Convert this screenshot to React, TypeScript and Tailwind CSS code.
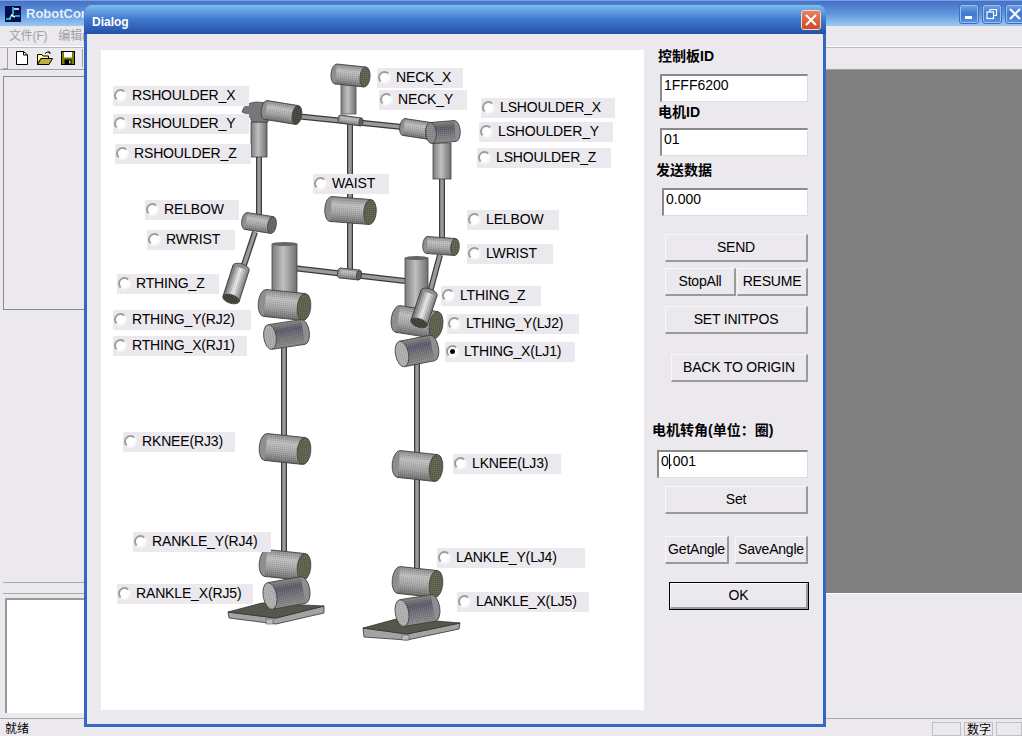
import React from "react"

const radios = [
  { label: "NECK_X", box: "left-[276px] top-[18px] w-[86px]" },
  { label: "NECK_Y", box: "left-[278px] top-[40px] w-[88px]" },
  { label: "RSHOULDER_X", box: "left-[12px] top-[36px] w-[136px]" },
  { label: "RSHOULDER_Y", box: "left-[12px] top-[64px] w-[136px]" },
  { label: "RSHOULDER_Z", box: "left-[14px] top-[94px] w-[136px]" },
  { label: "LSHOULDER_X", box: "left-[380px] top-[48px] w-[134px]" },
  { label: "LSHOULDER_Y", box: "left-[378px] top-[72px] w-[134px]" },
  { label: "LSHOULDER_Z", box: "left-[376px] top-[98px] w-[134px]" },
  { label: "WAIST", box: "left-[212px] top-[124px] w-[76px]" },
  { label: "RELBOW", box: "left-[44px] top-[150px] w-[94px]" },
  { label: "RWRIST", box: "left-[46px] top-[180px] w-[88px]" },
  { label: "LELBOW", box: "left-[366px] top-[160px] w-[92px]" },
  { label: "LWRIST", box: "left-[366px] top-[194px] w-[86px]" },
  { label: "RTHING_Z", box: "left-[16px] top-[224px] w-[102px]" },
  { label: "RTHING_Y(RJ2)", box: "left-[12px] top-[260px] w-[138px]" },
  { label: "RTHING_X(RJ1)", box: "left-[12px] top-[286px] w-[134px]" },
  { label: "LTHING_Z", box: "left-[340px] top-[236px] w-[100px]" },
  { label: "LTHING_Y(LJ2)", box: "left-[346px] top-[264px] w-[132px]" },
  { label: "LTHING_X(LJ1)", box: "left-[344px] top-[292px] w-[130px]", checked: true },
  { label: "RKNEE(RJ3)", box: "left-[22px] top-[382px] w-[112px]" },
  { label: "LKNEE(LJ3)", box: "left-[352px] top-[404px] w-[108px]" },
  { label: "RANKLE_Y(RJ4)", box: "left-[32px] top-[482px] w-[138px]" },
  { label: "RANKLE_X(RJ5)", box: "left-[16px] top-[534px] w-[136px]" },
  { label: "LANKLE_Y(LJ4)", box: "left-[336px] top-[498px] w-[148px]" },
  { label: "LANKLE_X(LJ5)", box: "left-[356px] top-[542px] w-[132px]" },
]

function Radio({ label, box, checked }: { label: string; box: string; checked?: boolean }) {
  return (
    <div className={`absolute h-[20px] pb-[2px] bg-[#ebe9ed] flex items-center text-[14px] leading-[18px] tracking-[-0.15px] text-black whitespace-nowrap ${box}`}>
      <span className="ml-px w-[13px] h-[13px] rounded-full bg-white border-2 border-t-[#9c9c9c] border-l-[#9c9c9c] border-r-[#f6f6f6] border-b-[#f6f6f6] flex items-center justify-center shrink-0">
        {checked && <span className="w-[5px] h-[5px] rounded-full bg-black" />}
      </span>
      <span className="ml-[5px]">{label}</span>
    </div>
  )
}

function Btn({ children, className }: { children: React.ReactNode; className: string }) {
  return (
    <div className={`h-[28px] bg-[#ebe9ed] border-t border-l border-t-[#f8f8f8] border-l-[#f8f8f8] border-r-2 border-b-2 border-r-[#9a9a9a] border-b-[#9a9a9a] flex items-center justify-center text-[14px] tracking-[-0.2px] text-black ${className}`}>
      {children}
    </div>
  )
}

function Field({ children, className }: { children: React.ReactNode; className: string }) {
  return (
    <div className={`h-[28px] bg-white border-t-2 border-l-2 border-t-[#8a8a8a] border-l-[#8a8a8a] border-r border-b border-r-[#dcdcdc] border-b-[#dcdcdc] pl-[2px] text-[14px] leading-[19px] text-black ${className}`}>
      {children}
    </div>
  )
}

// cylinder along p1->p2, cap drawn at p2
function Cyl({ x1, y1, x2, y2, r, fill = "url(#body)", cap = "#5f5f4c" }: { x1: number; y1: number; x2: number; y2: number; r: number; fill?: string; cap?: string }) {
  const len = Math.hypot(x2 - x1, y2 - y1)
  const deg = (Math.atan2(y2 - y1, x2 - x1) * 180) / Math.PI
  const e = r * 0.5
  return (
    <g transform={`translate(${x1} ${y1}) rotate(${deg})`} stroke="#3c3c3c" strokeWidth="0.8">
      <ellipse cx={0} cy={0} rx={e} ry={r} fill="#8e8e8e" />
      <rect x={0} y={-r} width={len} height={r * 2} fill={fill} stroke="none" />
      <rect x={0} y={-r} width={len} height={r * 2} fill="url(#dither)" stroke="none" />
      <line x1={0} y1={-r} x2={len} y2={-r} />
      <line x1={0} y1={r} x2={len} y2={r} />
      <ellipse cx={len} cy={0} rx={e} ry={r} fill={cap} />
      <ellipse cx={len} cy={0} rx={e} ry={r} fill="url(#dither)" stroke="none" />
    </g>
  )
}

function Rod({ x1, y1, x2, y2 }: { x1: number; y1: number; x2: number; y2: number }) {
  return (
    <g>
      <line x1={x1} y1={y1} x2={x2} y2={y2} stroke="#3a3a3a" strokeWidth="6" />
      <line x1={x1} y1={y1} x2={x2} y2={y2} stroke="#9a9a9a" strokeWidth="3.5" />
    </g>
  )
}

function Robot() {
  return (
    <svg className="absolute inset-0" width="543" height="660" viewBox="101 50 543 660">
      <defs>
        <pattern id="dither" width="2" height="2" patternUnits="userSpaceOnUse">
          <rect width="1" height="1" fill="#000" opacity="0.14" />
          <rect x="1" y="1" width="1" height="1" fill="#fff" opacity="0.14" />
        </pattern>
        <linearGradient id="body" x1="0" y1="0" x2="0" y2="1">
          <stop offset="0" stopColor="#8a8a8a" />
          <stop offset="0.3" stopColor="#c2c2c2" />
          <stop offset="0.65" stopColor="#a2a2a2" />
          <stop offset="1" stopColor="#6c6c6c" />
        </linearGradient>
        <linearGradient id="dark" x1="0" y1="0" x2="0" y2="1">
          <stop offset="0" stopColor="#8c8c8c" />
          <stop offset="0.35" stopColor="#77777c" />
          <stop offset="0.7" stopColor="#5a5a6c" />
          <stop offset="1" stopColor="#8a8a80" />
        </linearGradient>
        <linearGradient id="shiny" x1="0" y1="0" x2="0" y2="1">
          <stop offset="0" stopColor="#777" />
          <stop offset="0.5" stopColor="#efefef" />
          <stop offset="1" stopColor="#666" />
        </linearGradient>
        <linearGradient id="post" x1="0" y1="0" x2="1" y2="0">
          <stop offset="0" stopColor="#7c7c7c" />
          <stop offset="0.45" stopColor="#c0c0c0" />
          <stop offset="1" stopColor="#6f6f6f" />
        </linearGradient>
      </defs>

      {/* neck */}
      <rect x="341" y="78" width="15" height="36" fill="url(#post)" stroke="#555" strokeWidth="0.8" />
      <Cyl x1={336} y1={74} x2={365} y2={77} r={10} />

      {/* shoulders rod and spine */}
      <Rod x1={295} y1={116} x2={402} y2={127} />
      <Rod x1={350} y1={120} x2={350} y2={274} />
      <Cyl x1={340} y1={119} x2={361} y2={122} r={4} />
      <Cyl x1={331} y1={209} x2={370} y2={212} r={12.5} />

      {/* right arm */}
      <Rod x1={259} y1={155} x2={259} y2={216} />
      <rect x="251" y="122" width="16" height="35" fill="url(#post)" stroke="#444" strokeWidth="0.8" />
      <path d="M242 112 Q244 103 256 102 L270 103 L268 122 L252 122 Q250 114 242 112Z" fill="#77777a" stroke="#444" strokeWidth="0.8" />
      <Cyl x1={266} y1={110} x2={297} y2={115} r={9.5} fill="url(#body)" cap="#44443c" />
      <Cyl x1={246} y1={221} x2={272} y2={225} r={8.5} cap="#65656a" />
      <Rod x1={255} y1={232} x2={243} y2={268} />
      <Cyl x1={241} y1={268} x2={231} y2={299} r={8.5} fill="url(#shiny)" cap="#3e3e36" />

      {/* left arm */}
      <Rod x1={442} y1={178} x2={442} y2={240} />
      <rect x="433" y="143" width="18" height="36" fill="url(#post)" stroke="#444" strokeWidth="0.8" />
      <Cyl x1={404} y1={127} x2={430} y2={131} r={8.5} cap="#8f8f8f" />
      <Cyl x1={455} y1={131} x2={431} y2={133} r={10.5} fill="url(#dark)" cap="#8a8a8a" />
      <Cyl x1={427} y1={245} x2={455} y2={247} r={8.5} />
      <Rod x1={440} y1={255} x2={430} y2={292} />

      {/* hips */}
      <Rod x1={293} y1={268} x2={405} y2={281} />
      <Cyl x1={340} y1={273} x2={359} y2={275} r={5} />
      <rect x="272" y="244" width="25" height="49" fill="url(#post)" stroke="#444" strokeWidth="0.8" />
      <ellipse cx="284.5" cy="244" rx="12.5" ry="2" fill="#666" />
      <rect x="405" y="258" width="23" height="50" fill="url(#post)" stroke="#444" strokeWidth="0.8" />
      <ellipse cx="416.5" cy="258" rx="11.5" ry="2" fill="#666" />

      {/* right leg */}
      <Rod x1={284} y1={345} x2={284} y2={556} />
      <Cyl x1={265} y1={303} x2={304} y2={307} r={13.5} />
      <Cyl x1={303} y1={332} x2={270} y2={337} r={12.5} fill="url(#dark)" cap="#adadad" />
      <Cyl x1={266} y1={447} x2={304} y2={451} r={13.5} />
      <path d="M228 612 L276 618 L324 606 L324 613 L276 624 L229 618Z" fill="#a3a3a3" stroke="#333" strokeWidth="0.8" />
      <path d="M228 612 L262 603 L324 606 L276 618Z" fill="#56564a" stroke="#333" strokeWidth="0.8" />
      <rect x="266" y="619" width="7" height="5" fill="#bdbdbd" stroke="#555" strokeWidth="0.6" />
      <Cyl x1={266} y1={563} x2={304} y2={567} r={13.5} />
      <Cyl x1={303} y1={590} x2={270} y2={596} r={13.5} fill="url(#dark)" cap="#b2b2b2" />

      {/* left leg */}
      <Rod x1={417} y1={360} x2={417} y2={572} />
      <Cyl x1={398} y1={319} x2={436} y2={325} r={13.5} />
      <Cyl x1={432} y1={348} x2={402} y2={354} r={13} fill="url(#dark)" cap="#b0b0b0" />
      <Cyl x1={429} y1={293} x2={419} y2={323} r={8.5} fill="url(#shiny)" cap="#3e3e36" />
      <Cyl x1={399} y1={464} x2={436} y2={468} r={13.5} />
      <path d="M363 628 L407 634 L460 623 L459 629 L407 640 L364 637Z" fill="#a3a3a3" stroke="#333" strokeWidth="0.8" />
      <path d="M363 628 L400 618 L460 623 L407 634Z" fill="#56564a" stroke="#333" strokeWidth="0.8" />
      <rect x="402" y="635" width="7" height="5" fill="#bdbdbd" stroke="#555" strokeWidth="0.6" />
      <Cyl x1={399} y1={580} x2={436} y2={584} r={13.5} />
      <Cyl x1={433} y1={608} x2={402} y2={613} r={13.5} fill="url(#dark)" cap="#b2b2b2" />
    </svg>
  )
}

function DocIcon() {
  return (
    <svg width="12" height="14" viewBox="0 0 12 14">
      <path d="M.5 .5H7.5L11.5 4V13.5H.5Z" fill="#fff" stroke="#000" />
      <path d="M7.5 .5V4H11.5" fill="none" stroke="#000" />
    </svg>
  )
}

function OpenIcon() {
  return (
    <svg width="16" height="14" viewBox="0 0 16 14">
      <path d="M.5 3.5H5L6 5H11.5V7.5H4L.5 13.5Z" fill="#ffff99" stroke="#000" />
      <path d="M.5 13.5L4 7.5H15.5L12 13.5Z" fill="#c0b040" stroke="#000" />
      <path d="M8 2.5Q10 0 13 1.5M13 1.5L11.5 .5M13 1.5V3" fill="none" stroke="#000" />
    </svg>
  )
}

function SaveIcon() {
  return (
    <svg width="14" height="14" viewBox="0 0 14 14">
      <rect x=".5" y=".5" width="13" height="13" fill="#808000" stroke="#000" />
      <rect x="3" y="1" width="8" height="5.5" fill="#fff" />
      <rect x="3.5" y="8.5" width="7" height="5" fill="#000" />
      <rect x="8" y="9.5" width="1.5" height="3" fill="#c8c8c8" />
    </svg>
  )
}

function AppIcon() {
  return (
    <svg width="16" height="16" viewBox="0 0 16 16">
      <rect width="16" height="16" fill="#0a0a50" />
      <path d="M1 13H6M10 10H15M8 1V8L4 13" stroke="#20e0e0" strokeWidth="1.6" fill="none" />
      <path d="M9 3H14M6 9L10 11" stroke="#fff" strokeWidth="1.4" fill="none" />
    </svg>
  )
}

function CapButton({ children }: { children: React.ReactNode }) {
  return (
    <div className="w-[20px] h-[20px] rounded-[3px] border border-[#3f6cc4] shadow-[inset_0_0_0_1px_#9cc0ee] bg-gradient-to-b from-[#6ea4e4] via-[#3f78cc] to-[#5c92dc] flex items-center justify-center">
      {children}
    </div>
  )
}

export default function App() {
  return (
    <div className="relative w-[1022px] h-[736px] overflow-hidden bg-[#ebe9ed] font-['Liberation_Sans','Noto_Sans_CJK_SC',sans-serif]">
      {/* main window */}
      <div className="h-[26px] pl-[5px] flex items-center bg-gradient-to-b from-[#4472c6] via-[#5f94dc] to-[#9cc8f0] border-t border-t-[#7f9fe4]">
        <AppIcon />
        <span className="ml-[5px] text-[13px] font-bold text-[#e4eefa]">RobotCor</span>
        <div className="ml-auto flex gap-[3px] -mr-[3px]">
          <CapButton><span className="w-[7px] h-[3px] bg-white mt-[8px] -ml-[2px]" /></CapButton>
          <CapButton>
            <svg width="12" height="12" viewBox="0 0 12 12" fill="none" stroke="#fff" strokeWidth="1.2"><rect x="1" y="4" width="6.5" height="6.5" /><path d="M4 4V1.5H10.5V7.5H8" /></svg>
          </CapButton>
          <CapButton>
            <svg width="12" height="12" viewBox="0 0 12 12" stroke="#fff" strokeWidth="2"><path d="M1 1L11 11M11 1L1 11" /></svg>
          </CapButton>
        </div>
      </div>
      <div className="h-[20px] pl-[9px] flex items-center gap-[11px] text-[12px] leading-[18px] tracking-[-0.2px] text-[#a0a0a0]">
        <span>文件(F)</span>
        <span>编辑(E)</span>
      </div>
      <div className="h-[24px] pl-[3px] flex items-center border-t border-t-white shadow-[inset_0_1px_0_#b8b8b8] border-b border-b-[#a0a0a0]">
        <div className="w-[5px] h-[21px] border-r border-b border-[#a0a0a0]" />
        <div className="ml-[8px] flex"><DocIcon /></div>
        <div className="ml-[9px] flex"><OpenIcon /></div>
        <div className="ml-[8px] flex"><SaveIcon /></div>
        <div className="ml-[7px] w-px h-[18px] bg-[#a0a0a0]" />
      </div>
      <div className="h-[648px] flex">
        <div className="w-[85px] pl-[3px] flex flex-col shrink-0">
          <div className="mt-[6px] h-[234px] border-l border-t border-b border-[#8c8c8c]" />
          <div className="mt-[272px] h-[12px] border-t border-b border-[#a8a8a8]" />
          <div className="mt-[4px] ml-[2px] h-[115px] bg-white border-t-2 border-l-2 border-[#9a9a9a]" />
        </div>
        <div className="flex-1">
          <div className="h-[524px] bg-[#808080] border-b border-b-white" />
        </div>
      </div>
      <div className="h-[18px] pl-[5px] flex border-t border-t-[#a8a8a8] text-[12px] leading-[14px] text-black">
        <span className="self-end">就绪</span>
        <div className="ml-auto self-end flex gap-[3px] h-[14px] whitespace-nowrap">
          <div className="w-[29px] border border-[#c0c0c0]" />
          <div className="w-[29px] border border-[#c0c0c0] pl-[2px]">数字</div>
          <div className="w-[26px] border border-[#c0c0c0]" />
        </div>
      </div>

      {/* dialog */}
      <div className="absolute left-[84px] top-[5px] w-[742px] h-[722px] rounded-t-[8px] bg-[#ebe9ed] border-x-[3px] border-b-[3px] border-[#3766c4] flex flex-col">
        <div className="-mx-[3px] h-[29px] rounded-t-[8px] pl-[8px] pr-[5px] flex items-center justify-between bg-gradient-to-b from-[#7fbcee] via-[#3f78cc] to-[#2450a8] text-[12px] font-bold text-white">
          <span className="mt-[4px]">Dialog</span>
          <div className="w-[20px] h-[20px] rounded-[3px] border border-[#f0d8d0] bg-gradient-to-b from-[#e8805c] to-[#cf4a24] flex items-center justify-center">
            <svg width="12" height="12" viewBox="0 0 12 12" stroke="#fff" strokeWidth="2"><path d="M1 1L11 11M11 1L1 11" /></svg>
          </div>
        </div>
        <div className="flex-1 flex pl-[14px]">
          <div className="relative mt-[16px] w-[543px] h-[660px] bg-white shrink-0">
            <Robot />
            {radios.map((r) => (
              <Radio key={r.label} {...r} />
            ))}
          </div>
          <div className="w-[164px] flex flex-col items-end">
            <div className="self-start ml-[14px] mt-[14px] h-[16px] text-[14px] leading-[16px] font-bold">控制板ID</div>
            <Field className="mt-[10px] w-[148px]">1FFF6200</Field>
            <div className="self-start ml-[14px] mt-[2px] h-[16px] text-[14px] leading-[16px] font-bold">电机ID</div>
            <Field className="mt-[8px] w-[148px]">01</Field>
            <div className="self-start ml-[12px] mt-[6px] h-[16px] text-[14px] leading-[16px] font-bold">发送数据</div>
            <Field className="mt-[10px] w-[146px]">0.000</Field>
            <Btn className="mt-[18px] w-[143px]">SEND</Btn>
            <div className="mt-[6px] flex gap-px">
              <Btn className="w-[71px]">StopAll</Btn>
              <Btn className="w-[71px]">RESUME</Btn>
            </div>
            <Btn className="mt-[10px] w-[143px]">SET INITPOS</Btn>
            <Btn className="mt-[20px] w-[137px]">BACK TO ORIGIN</Btn>
            <div className="self-start ml-[8px] mt-[40px] h-[16px] text-[14px] leading-[16px] font-bold whitespace-nowrap">电机转角(单位：圈)</div>
            <Field className="mt-[12px] w-[151px] flex">
              <span>0</span>
              <span className="w-px h-[15px] mt-[2px] bg-black" />
              <span className="-ml-px">.001</span>
            </Field>
            <Btn className="mt-[8px] w-[143px]">Set</Btn>
            <div className="mt-[22px] flex gap-[6px]">
              <Btn className="w-[64px]">GetAngle</Btn>
              <Btn className="w-[73px]">SaveAngle</Btn>
            </div>
            <div className="mt-[18px] -mr-px w-[140px] h-[28px] border border-black">
              <Btn className="w-full !h-[26px]">OK</Btn>
            </div>
          </div>
        </div>
      </div>
    </div>
  )
}
